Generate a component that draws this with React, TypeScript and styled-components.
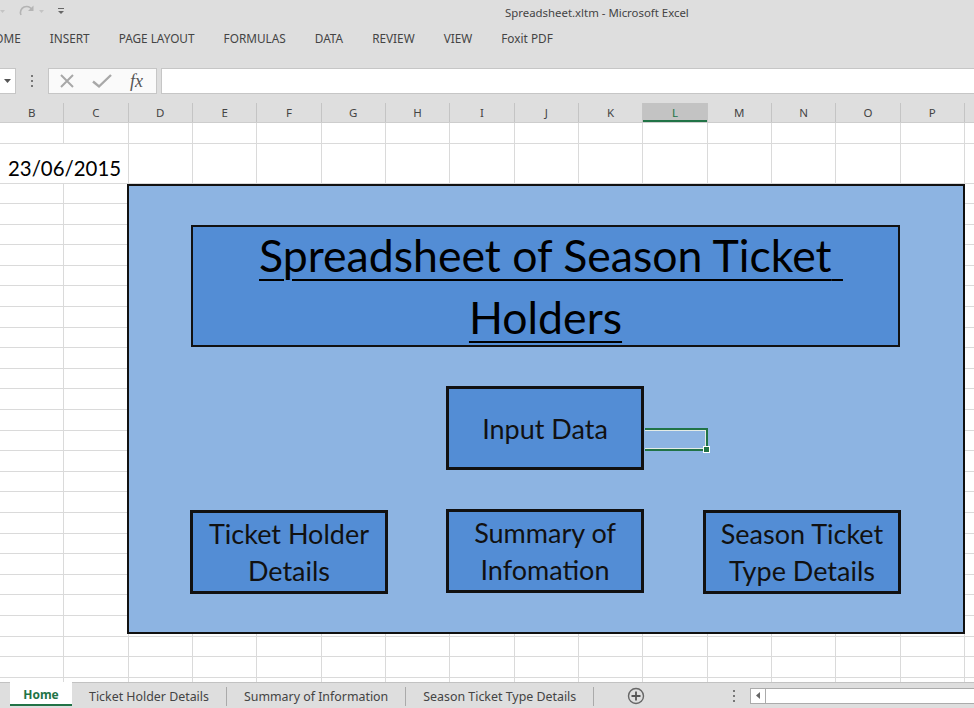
import React from 'react';
import styled, { createGlobalStyle } from 'styled-components';

const UI_FONT = '"Noto Sans", "Open Sans", Arial, sans-serif';
const SHEET_FONT = 'Lato, "Noto Sans", sans-serif';
const EXCEL_GREEN = '#217346';
const CHROME_BG = '#dedede';
const GRID_LINE = '#dadada';
const FIELD_BORDER = '#c6c6c6';

const COLUMN_WIDTH = 64.33;
const COLUMNS = ['B', 'C', 'D', 'E', 'F', 'G', 'H', 'I', 'J', 'K', 'L', 'M', 'N', 'O', 'P', 'Q'];
const SELECTED_COLUMN = 'L';
const BODY_ROWS = 25;

const RIBBON_TABS = ['HOME', 'INSERT', 'PAGE LAYOUT', 'FORMULAS', 'DATA', 'REVIEW', 'VIEW', 'Foxit PDF'];
const SHEETS = ['Home', 'Ticket Holder Details', 'Summary of Information', 'Season Ticket Type Details'];

const GlobalStyle = createGlobalStyle`
  html, body {
    margin: 0;
    padding: 0;
  }
  body {
    background: ${CHROME_BG};
    overflow: hidden;
  }
`;

const Window = styled.div`
  width: 974px;
  height: 708px;
  overflow: hidden;
  display: flex;
  flex-direction: column;
  background: ${CHROME_BG};
  font-family: ${UI_FONT};
  color: #444;
`;

const TitleBar = styled.div`
  height: 24px;
  flex: none;
  display: flex;
  align-items: center;
`;

const QuickAccess = styled.svg`
  flex: none;
  display: block;
`;

const WindowTitle = styled.div`
  margin-left: 435px;
  font-size: 11.4px;
  white-space: nowrap;
`;

const RibbonTabs = styled.div`
  height: 28px;
  flex: none;
  display: flex;
  align-items: center;
  margin-left: -29px;
`;

const RibbonTab = styled.div`
  padding: 0 14.5px;
  font-size: 11.8px;
  white-space: nowrap;
`;

const FormulaBar = styled.div`
  height: 26px;
  flex: none;
  margin-top: 16px;
  display: flex;
  align-items: stretch;
`;

const NameBox = styled.div`
  width: 17px;
  margin-left: -1px;
  box-sizing: border-box;
  background: #fff;
  border: 1px solid ${FIELD_BORDER};
  display: flex;
  align-items: center;
  justify-content: center;
`;

const Grip = styled.svg`
  width: 32px;
  flex: none;
  align-self: center;
`;

const FunctionBox = styled.div`
  width: 109px;
  box-sizing: border-box;
  background: #fafafa;
  border: 1px solid ${FIELD_BORDER};
  display: flex;
  align-items: center;
  padding-left: 10px;
  gap: 17px;
`;

const FxLabel = styled.span`
  font-family: 'Liberation Serif', serif;
  font-style: italic;
  font-size: 18px;
  color: #555;
  margin-left: 1px;
`;

const FormulaInput = styled.div`
  flex: 1;
  margin-left: 4px;
  margin-right: -2px;
  background: #fff;
  border: 1px solid ${FIELD_BORDER};
`;

const ColumnHeaders = styled.div`
  height: 20px;
  flex: none;
  margin-top: 9px;
  display: grid;
  grid-template-columns: repeat(${COLUMNS.length}, ${COLUMN_WIDTH}px);
  border-bottom: 1px solid #cdcdcd;
  box-sizing: border-box;
`;

const HeaderCell = styled.div<{ $selected: boolean }>`
  display: flex;
  align-items: center;
  justify-content: center;
  font-size: 11.5px;
  color: ${(props) => (props.$selected ? EXCEL_GREEN : '#444')};
  background: ${(props) => (props.$selected ? '#c3c3c3' : 'transparent')};
  box-shadow: ${(props) => (props.$selected ? `inset 0 -2px 0 ${EXCEL_GREEN}` : 'none')};
  border-right: 1px solid #c4c4c4;
  box-sizing: border-box;
`;

const SheetBody = styled.div`
  position: relative;
  flex: 1;
  overflow: hidden;
  background: #fff;
`;

const CellGrid = styled.div`
  display: grid;
  grid-template-columns: repeat(${COLUMNS.length}, ${COLUMN_WIDTH}px);
  grid-template-rows: 20.5px 40px;
  grid-auto-rows: 20.6px;
`;

const Cell = styled.div`
  border-right: 1px solid ${GRID_LINE};
  border-bottom: 1px solid ${GRID_LINE};
  box-sizing: border-box;
`;

const DateCell = styled(Cell)`
  grid-column: span 2;
  display: flex;
  align-items: flex-end;
  padding: 0 0 3px 8px;
  font-family: ${SHEET_FONT};
  font-size: 20.4px;
  color: #000;
  white-space: nowrap;
`;

// Drawing objects float over the cells
const ShapeCanvas = styled.div`
  position: absolute;
  left: 127px;
  top: 61px;
  width: 838px;
  height: 450px;
  box-sizing: border-box;
  background: #8db4e2;
  border: 2px solid #111;
`;

const TitleShape = styled.div`
  position: absolute;
  left: 62px;
  top: 39px;
  width: 709px;
  height: 122px;
  box-sizing: border-box;
  background: #538dd5;
  border: 2px solid #111;
  display: flex;
  flex-direction: column;
  align-items: center;
  justify-content: center;
  font-family: ${SHEET_FONT};
  font-size: 44.6px;
  line-height: 62px;
  color: #000;
`;

const TitleLine = styled.div`
  white-space: nowrap;
  text-decoration: underline;
  text-decoration-thickness: 2px;
  text-underline-offset: 7px;
`;

// underlined trailing space that does not count toward centring
const TrailingSpace = styled.span`
  margin-right: -11px;
`;

const ButtonShape = styled.div<{ $x: number; $y: number }>`
  position: absolute;
  left: ${(props) => props.$x}px;
  top: ${(props) => props.$y}px;
  width: 198px;
  height: 84px;
  box-sizing: border-box;
  background: #538dd5;
  border: 3px solid #111;
  display: flex;
  align-items: center;
  justify-content: center;
  text-align: center;
  font-family: ${SHEET_FONT};
  font-size: 27px;
  line-height: 37px;
  color: #111;
`;

const ActiveCell = styled.div`
  position: absolute;
  left: 645px;
  top: 305px;
  width: 63px;
  height: 23px;
  box-sizing: border-box;
  border: 2px solid ${EXCEL_GREEN};
  border-left: none;
  box-shadow: inset 0 1px 0 #e4ece6, inset -1px -1px 0 #e4ece6;
`;

const FillHandle = styled.div`
  position: absolute;
  right: -4px;
  bottom: -4px;
  width: 5px;
  height: 5px;
  background: ${EXCEL_GREEN};
  border: 1px solid #fff;
`;

const SheetTabBar = styled.div`
  height: 26px;
  flex: none;
  display: flex;
  align-items: stretch;
  padding-left: 10px;
  box-sizing: border-box;
  border-top: 1px solid #c2c2c2;
`;

const SheetTab = styled.div<{ $active: boolean }>`
  display: flex;
  align-items: center;
  justify-content: center;
  font-size: 12.4px;
  white-space: nowrap;
  ${(props) =>
    props.$active
      ? `
    width: 62px;
    margin-top: -1px;
    margin-bottom: 2px;
    background: #fff;
    color: ${EXCEL_GREEN};
    font-weight: 700;
    font-size: 12px;
    box-shadow: inset 0 -2px 0 ${EXCEL_GREEN};
  `
      : `
    padding: 0 17px;
    margin: 4px 0 2px;
    color: #444;
    border-right: 1px solid #aaa;
  `}
`;

const NewSheetButton = styled.svg`
  flex: none;
  align-self: center;
  margin-left: 33px;
`;

const TabTools = styled.div`
  margin-left: auto;
  width: 248px;
  display: flex;
  align-items: center;
`;

const TabGrip = styled.svg`
  flex: none;
  width: 24px;
`;

const ScrollTrack = styled.div`
  flex: 1;
  height: 14px;
  margin-right: -4px;
  background: #fff;
  border: 1px solid #ababab;
  display: flex;
`;

const ScrollButton = styled.div`
  width: 14px;
  border-right: 1px solid #ababab;
  display: flex;
  align-items: center;
  justify-content: center;
`;

const Caret = ({ color = '#555' }: { color?: string }) => (
  <svg width="7" height="4" viewBox="0 0 7 4">
    <path d="M0 0h7L3.5 4z" fill={color} />
  </svg>
);

const VerticalDots = ({ x }: { x: number }) => (
  <>
    <rect x={x} y="0" width="2" height="2" fill="#777" />
    <rect x={x} y="5" width="2" height="2" fill="#777" />
    <rect x={x} y="10" width="2" height="2" fill="#777" />
  </>
);

const renderBodyRows = () => {
  const cells: React.ReactNode[] = [];
  const total = BODY_ROWS + 2;
  for (let row = 0; row < total; row += 1) {
    if (row === 1) {
      cells.push(<DateCell key="date">23/06/2015</DateCell>);
      for (let col = 2; col < COLUMNS.length; col += 1) {
        cells.push(<Cell key={`${row}-${col}`} />);
      }
    } else {
      COLUMNS.forEach((_, col) => cells.push(<Cell key={`${row}-${col}`} />));
    }
  }
  return cells;
};

const App = () => (
  <Window>
    <GlobalStyle />
    <TitleBar>
      <QuickAccess width="70" height="24" viewBox="0 0 70 24">
        <path d="M0 10h5l-2.5 3z" fill="#c4c4c4" />
        <path d="M21 15a6 6 0 0 1 11-5" fill="none" stroke="#b4b4b4" strokeWidth="1.6" />
        <path d="M33.5 5.5v5.5h-5.5z" fill="#b4b4b4" />
        <path d="M39 10h5l-2.5 3z" fill="#c4c4c4" />
        <rect x="58" y="8" width="6" height="1" fill="#666" />
        <path d="M58 11h6l-3 3z" fill="#666" />
      </QuickAccess>
      <WindowTitle>Spreadsheet.xltm - Microsoft Excel</WindowTitle>
    </TitleBar>

    <RibbonTabs>
      {RIBBON_TABS.map((tab) => (
        <RibbonTab key={tab}>{tab}</RibbonTab>
      ))}
    </RibbonTabs>

    <FormulaBar>
      <NameBox>
        <Caret />
      </NameBox>
      <Grip width="32" height="12" viewBox="0 0 32 12">
        <VerticalDots x={15} />
      </Grip>
      <FunctionBox>
        <svg width="16" height="16" viewBox="0 0 16 16">
          <path d="M2 2l12 12M14 2L2 14" stroke="#a8a8a8" strokeWidth="2" />
        </svg>
        <svg width="20" height="16" viewBox="0 0 20 16">
          <path d="M1 8.5l6 5L19 2" fill="none" stroke="#a8a8a8" strokeWidth="2.4" />
        </svg>
        <FxLabel>fx</FxLabel>
      </FunctionBox>
      <FormulaInput />
    </FormulaBar>

    <ColumnHeaders>
      {COLUMNS.map((column) => (
        <HeaderCell key={column} $selected={column === SELECTED_COLUMN}>
          {column === 'Q' ? '' : column}
        </HeaderCell>
      ))}
    </ColumnHeaders>

    <SheetBody>
      <CellGrid>{renderBodyRows()}</CellGrid>
      <ShapeCanvas>
        <TitleShape>
          <TitleLine>
            Spreadsheet of Season Ticket<TrailingSpace>&nbsp;</TrailingSpace>
          </TitleLine>
          <TitleLine>Holders</TitleLine>
        </TitleShape>
        <ButtonShape $x={317} $y={200}>Input Data</ButtonShape>
        <ButtonShape $x={61} $y={324}>
          Ticket Holder
          <br />
          Details
        </ButtonShape>
        <ButtonShape $x={317} $y={323}>
          Summary of
          <br />
          Infomation
        </ButtonShape>
        <ButtonShape $x={574} $y={324}>
          Season Ticket
          <br />
          Type Details
        </ButtonShape>
      </ShapeCanvas>
      <ActiveCell>
        <FillHandle />
      </ActiveCell>
    </SheetBody>

    <SheetTabBar>
      {SHEETS.map((sheet, index) => (
        <SheetTab key={sheet} $active={index === 0}>
          {sheet}
        </SheetTab>
      ))}
      <NewSheetButton width="18" height="18" viewBox="0 0 18 18">
        <circle cx="9" cy="9" r="7.5" fill="none" stroke="#666" strokeWidth="1.4" />
        <path d="M9 4.5v9M4.5 9h9" stroke="#555" strokeWidth="1.8" />
      </NewSheetButton>
      <TabTools>
        <TabGrip width="24" height="12" viewBox="0 0 24 12">
          <VerticalDots x={7} />
        </TabGrip>
        <ScrollTrack>
          <ScrollButton>
            <svg width="4" height="7" viewBox="0 0 4 7">
              <path d="M4 0v7L0 3.5z" fill="#666" />
            </svg>
          </ScrollButton>
        </ScrollTrack>
      </TabTools>
    </SheetTabBar>
  </Window>
);

export default App;
